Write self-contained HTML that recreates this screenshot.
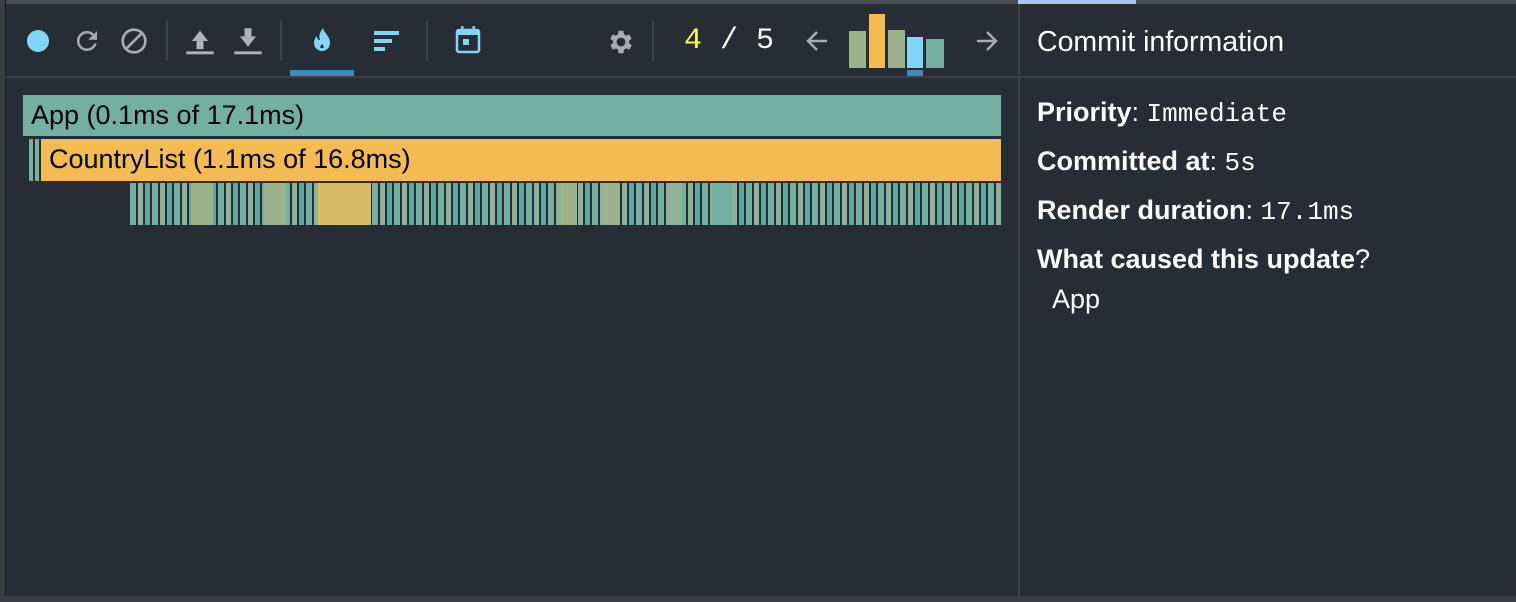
<!DOCTYPE html><html><head><style>
body{margin:0;width:1516px;height:602px;background:#282c34;overflow:hidden;position:relative;font-family:"Liberation Sans",sans-serif}
.a{position:absolute;white-space:nowrap}
.ic{position:absolute}
.m{font-family:'Liberation Mono',monospace;font-size:26px}
</style></head><body>
<div class="a" style="left:0;top:0;width:1516px;height:4px;background:#4a4d52"></div>
<div class="a" style="left:1018px;top:0;width:118px;height:4px;background:#a9c4f5"></div>
<div class="a" style="left:0;top:0;width:5px;height:602px;background:#3a3d42"></div>
<div class="a" style="left:5px;top:0;width:1px;height:602px;background:#1c1e22"></div>
<div class="a" style="left:0;top:596px;width:1516px;height:6px;background:#3a3d42"></div>
<div class="a" style="left:6px;top:76px;width:1510px;height:2px;background:#3d414a"></div>
<div class="a" style="left:1018px;top:4px;width:2px;height:592px;background:#3d414a"></div>
<!-- toolbar -->
<div class="a" style="left:27px;top:30px;width:22px;height:22px;border-radius:50%;background:#7fd6f7"></div>
<svg class="ic" style="left:72px;top:26px" width="30" height="30" viewBox="0 0 24 24"><path fill="#a9abb1" d="M17.65 6.35A7.96 7.96 0 0 0 12 4a8 8 0 1 0 7.73 10h-2.08A6 6 0 1 1 12 6c1.66 0 3.14.69 4.22 1.78L13 11h7V4l-2.35 2.35z"/></svg>
<svg class="ic" style="left:118px;top:25px" width="32" height="32" viewBox="0 0 24 24"><circle cx="12" cy="12" r="8.5" fill="none" stroke="#a9abb1" stroke-width="2"/><path d="M6.5 17.5l11-11" stroke="#a9abb1" stroke-width="2"/></svg>
<div class="a" style="left:166px;top:21px;width:2px;height:40px;background:#3d414a"></div>
<svg class="ic" style="left:186px;top:26px" width="28" height="30" viewBox="0 0 24 26"><path fill="#b0b2b8" d="M5 13h4v7h6v-7h4L12 4z"/><rect x="0" y="22" width="24" height="2.5" fill="#b0b2b8"/></svg>
<svg class="ic" style="left:234px;top:26px" width="28" height="30" viewBox="0 0 24 26"><path fill="#b0b2b8" d="M9 2h6v7h4l-7 9-7-9h4z"/><rect x="0" y="22" width="24" height="2.5" fill="#b0b2b8"/></svg>
<div class="a" style="left:280px;top:21px;width:2px;height:40px;background:#3d414a"></div>
<svg class="ic" style="left:310px;top:27px" width="24" height="28" viewBox="0 0 24 28"><path fill="#7fd6f7" d="M13 1c1 5 7 8 7 15a8 8 0 0 1-16 0c0-4 2-6 3-7 0 3 1 4 3 4-2-5 1-9 3-12z"/><path fill="#282c34" d="M12 17c-1.5 1.5-2 3-1.5 4h3c.5-1 0-2.5-1.5-4z"/></svg>
<div class="a" style="left:290px;top:70px;width:64px;height:6px;background:#4189b8"></div>
<div class="a" style="left:374px;top:31px;width:25px;height:4px;background:#7fd6f7"></div>
<div class="a" style="left:374px;top:39px;width:18px;height:4px;background:#7fd6f7"></div>
<div class="a" style="left:374px;top:47px;width:11px;height:4px;background:#7fd6f7"></div>
<div class="a" style="left:426px;top:21px;width:2px;height:40px;background:#3d414a"></div>
<svg class="ic" style="left:455px;top:25px" width="26" height="30" viewBox="0 0 26 30"><rect x="2" y="5" width="22" height="22" rx="2" fill="none" stroke="#7fd6f7" stroke-width="2.5"/><rect x="2" y="5" width="22" height="5" fill="#7fd6f7"/><rect x="6" y="1" width="2.5" height="6" fill="#7fd6f7"/><rect x="17.5" y="1" width="2.5" height="6" fill="#7fd6f7"/><rect x="8" y="14" width="6" height="6" fill="#7fd6f7"/></svg>
<svg class="ic" style="left:606px;top:27px" width="30" height="30" viewBox="0 0 24 24"><path fill="#a9abb1" d="M19.4 13a7.5 7.5 0 0 0 0-2l2.1-1.6-2-3.5-2.5 1a7 7 0 0 0-1.7-1L15 3h-4l-.4 2.9a7 7 0 0 0-1.7 1l-2.5-1-2 3.5L6.6 11a7.5 7.5 0 0 0 0 2l-2.1 1.6 2 3.5 2.5-1a7 7 0 0 0 1.7 1L11 21h4l.4-2.9a7 7 0 0 0 1.7-1l2.5 1 2-3.5zM13 15.5a3.5 3.5 0 1 1 0-7 3.5 3.5 0 0 1 0 7z" transform="translate(-1 0)"/></svg>
<div class="a" style="left:652px;top:21px;width:2px;height:40px;background:#3d414a"></div>
<div class="a" style="left:684px;top:24px;font-family:'Liberation Mono',monospace;font-size:30px;color:#fff;white-space:pre"><span style="color:#fdfa4f">4</span> / 5</div>
<svg class="ic" style="left:805px;top:29px" width="26" height="24" viewBox="0 0 26 24"><path d="M22 12H4M12 3l-9 9 9 9" fill="none" stroke="#a9abb1" stroke-width="2.5"/></svg>
<svg class="ic" style="left:973px;top:29px" width="26" height="24" viewBox="0 0 26 24"><path d="M4 12h18M14 3l9 9-9 9" fill="none" stroke="#a9abb1" stroke-width="2.5"/></svg>
<div class="a" style="left:849px;top:31px;width:17px;height:37px;background:#9db38b"></div>
<div class="a" style="left:869px;top:14px;width:16px;height:54px;background:#f3bb52"></div>
<div class="a" style="left:888px;top:30px;width:17px;height:38px;background:#9db38b"></div>
<div class="a" style="left:907px;top:37px;width:16px;height:31px;background:#7fd6f7"></div>
<div class="a" style="left:926px;top:39px;width:18px;height:29px;background:#73b0a0"></div>
<div class="a" style="left:907px;top:70px;width:16px;height:6px;background:#4189b8"></div>
<div class="a" style="left:1037px;top:26px;color:#fff;font-size:28.5px">Commit information</div>
<!-- flame -->
<div class="a" style="left:23px;top:95px;width:978px;height:41px;background:#74b0a1"></div>
<div class="a" style="left:31px;top:100px;font-size:27px;color:#000">App (0.1ms of 17.1ms)</div>
<div class="a" style="left:29px;top:139px;width:4px;height:42px;background:#74b0a1"></div>
<div class="a" style="left:35px;top:139px;width:4px;height:42px;background:#74b0a1"></div>
<div class="a" style="left:41px;top:139px;width:960px;height:42px;background:#f3bb52"></div>
<div class="a" style="left:49px;top:144px;font-size:27px;color:#000">CountryList (1.1ms of 16.8ms)</div>
<div class="a" style="left:130px;top:183px;width:871px;height:42px;background:repeating-linear-gradient(90deg,#74b0a1 0 6px,#282c34 6px 8px,#8fb39a 8px 13px,#282c34 13px 15px,#5fa8a0 15px 20px,#282c34 20px 22px)"></div>
<div class="a" style="left:191px;top:183px;width:22px;height:42px;background:#9db38b"></div>
<div class="a" style="left:264px;top:183px;width:22px;height:42px;background:#9db38b"></div>
<div class="a" style="left:318px;top:183px;width:53px;height:42px;background:#d8bd67"></div>
<div class="a" style="left:561px;top:183px;width:16px;height:42px;background:#9db38b"></div>
<div class="a" style="left:604px;top:183px;width:16px;height:42px;background:#9db38b"></div>
<div class="a" style="left:668px;top:183px;width:14px;height:42px;background:#8fb39a"></div>
<div class="a" style="left:712px;top:183px;width:20px;height:42px;background:#74b0a1"></div>
<!-- right -->
<div class="a" style="left:1037px;top:97px;font-size:27px;color:#fff"><b>Priority</b>: <span class="m">Immediate</span></div>
<div class="a" style="left:1037px;top:146px;font-size:27px;color:#fff"><b>Committed at</b>: <span class="m">5s</span></div>
<div class="a" style="left:1037px;top:195px;font-size:27px;color:#fff"><b>Render duration</b>: <span class="m">17.1ms</span></div>
<div class="a" style="left:1037px;top:244px;font-size:27px;color:#fff"><b>What caused this update</b>?</div>
<div class="a" style="left:1052px;top:284px;font-size:27px;color:#fff">App</div>
</body></html>
